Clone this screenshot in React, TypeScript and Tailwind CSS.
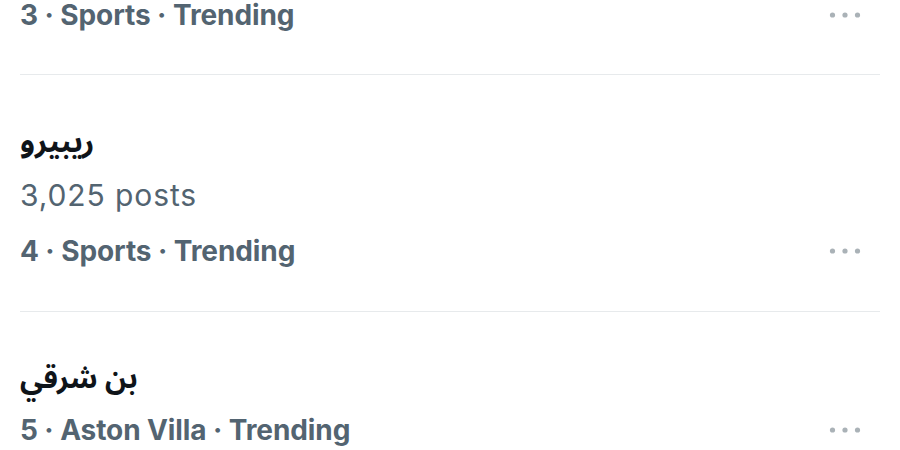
import React from "react";

const FONT = { fontFamily: 'Inter, "DejaVu Sans", sans-serif' };
const ARABIC = { fontFamily: '"Noto Sans Arabic", "DejaVu Sans", sans-serif' };

type Trend = {
  rank: number;
  category: string;
};

function MoreDots() {
  return (
    <svg width="34" height="10" viewBox="0 0 34 10" className="shrink-0">
      <circle cx="4.5" cy="5" r="2.6" fill="#aab2b7" />
      <circle cx="17" cy="5" r="2.6" fill="#aab2b7" />
      <circle cx="29.5" cy="5" r="2.6" fill="#aab2b7" />
    </svg>
  );
}

function MetaLine({ trend, h }: { trend: Trend; h: string }) {
  return (
    <div className={`flex items-center justify-between ${h}`}>
      <span className="text-[28px] leading-none font-bold tracking-[-0.1px] text-[#536471]">
        {trend.rank} · {trend.category} · Trending
      </span>
      <div className="mr-[18px]">
        <MoreDots />
      </div>
    </div>
  );
}

export default function App() {
  return (
    <div className="h-[450px] w-[900px] overflow-hidden bg-white px-5" style={FONT}>
      {/* partially visible item */}
      <div className="border-b border-[#e7eaec] pb-[44px]">
        <MetaLine trend={{ rank: 3, category: "Sports" }} h="h-[30px]" />
      </div>

      <div className="border-b border-[#e7eaec] pt-[42px] pb-[30px]">
        <div dir="rtl" className="flex h-[52px] items-center justify-end">
          <span className="text-[30px] leading-none font-bold text-[#0f1419]" style={ARABIC}>
            ريبيرو
          </span>
        </div>
        <div className="flex h-[52px] items-center">
          <span className="text-[30px] tracking-[0.9px] text-[#536471]">3,025 posts</span>
        </div>
        <MetaLine trend={{ rank: 4, category: "Sports" }} h="h-[60px]" />
      </div>

      <div className="pt-[40px]">
        <div dir="rtl" className="flex h-[52px] items-center justify-end">
          <span className="text-[29px] leading-none font-bold text-[#0f1419]" style={ARABIC}>
            بن شرقي
          </span>
        </div>
        <MetaLine trend={{ rank: 5, category: "Aston Villa" }} h="h-[52px]" />
      </div>
    </div>
  );
}
